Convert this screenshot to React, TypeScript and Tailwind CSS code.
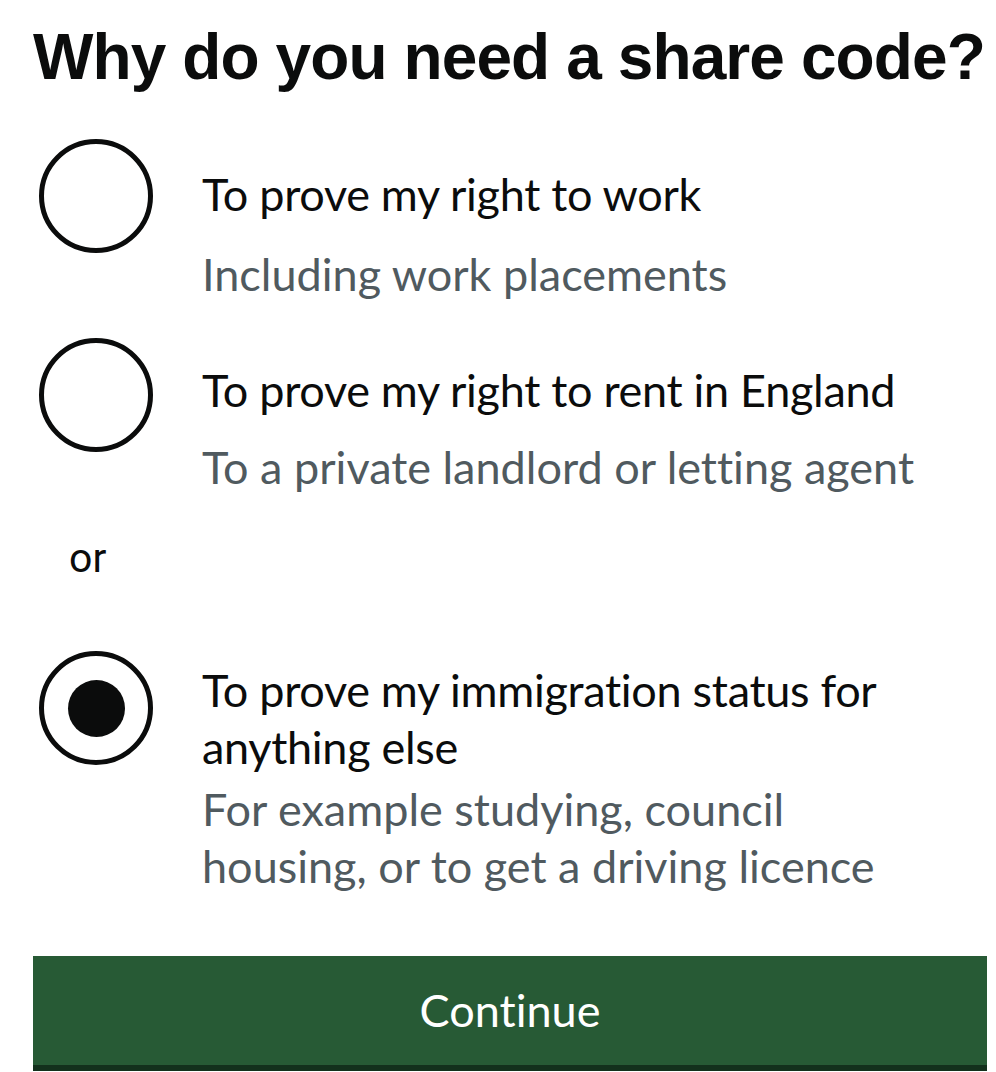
const body = "[font-family:Lato,'Noto_Sans',sans-serif] [font-variant-ligatures:none]"

type Option = {
  label: string[]
  hint: string[]
  checked?: boolean
  labelPad: string
  hintGap: string
  spacing: string
}

const options: Option[] = [
  {
    label: ['To prove my right to work'],
    hint: ['Including work placements'],
    labelPad: 'pt-[27px]',
    hintGap: 'mt-[23px]',
    spacing: 'mt-[46px]',
  },
  {
    label: ['To prove my right to rent in England'],
    hint: ['To a private landlord or letting agent'],
    labelPad: 'pt-[24px]',
    hintGap: 'mt-[20px]',
    spacing: 'mt-[35px]',
  },
]

const last: Option = {
  label: ['To prove my immigration status for', 'anything else'],
  hint: ['For example studying, council', 'housing, or to get a driving licence'],
  checked: true,
  labelPad: 'pt-[11px]',
  hintGap: 'mt-[5px]',
  spacing: 'mt-[69px]',
}

function Radio({ checked }: { checked?: boolean }) {
  return (
    <div className="ml-[6px] flex h-[114px] w-[114px] shrink-0 items-center justify-center rounded-full border-[5px] border-[#0b0c0c] bg-white">
      {checked && <div className="h-[57px] w-[57px] rounded-full bg-[#0b0c0c]" />}
    </div>
  )
}

function Item({ opt }: { opt: Option }) {
  return (
    <div className={`flex ${opt.spacing}`}>
      <Radio checked={opt.checked} />
      <div className={`ml-[49px] pr-[43px] ${opt.labelPad} ${body}`}>
        <div className="text-[45px] leading-[57px] tracking-[-0.3px] text-[#0b0c0c]">
          {opt.label.map((l) => (
            <div key={l}>{l}</div>
          ))}
        </div>
        <div className={`${opt.hintGap} text-[45px] leading-[57px] text-[#505a5f]`}>
          {opt.hint.map((h) => (
            <div key={h}>{h}</div>
          ))}
        </div>
      </div>
    </div>
  )
}

export default function App() {
  return (
    <div className="min-h-screen bg-white pl-[33px] pr-[9px] pt-[21px] text-[#0b0c0c]">
      <h1 className="whitespace-nowrap [font-family:'Liberation_Sans',Arial,sans-serif] text-[64px] font-bold leading-[72px] tracking-[-0.9px]">
        Why do you need a share code?
      </h1>

      <div className="flex flex-col">
        {options.map((o) => (
          <Item key={o.label[0]} opt={o} />
        ))}

        <div className="ml-[36px] mt-[38px] [font-family:Roboto,'Liberation_Sans',sans-serif] text-[41px] leading-[48px]">
          or
        </div>

        <Item opt={last} />
      </div>

      <button
        type="button"
        className={`mt-[61px] flex h-[115px] w-full items-center justify-center border-b-[6px] border-[#13301c] bg-[#275a35] text-[45px] leading-[57px] text-white ${body}`}
      >
        Continue
      </button>
    </div>
  )
}
